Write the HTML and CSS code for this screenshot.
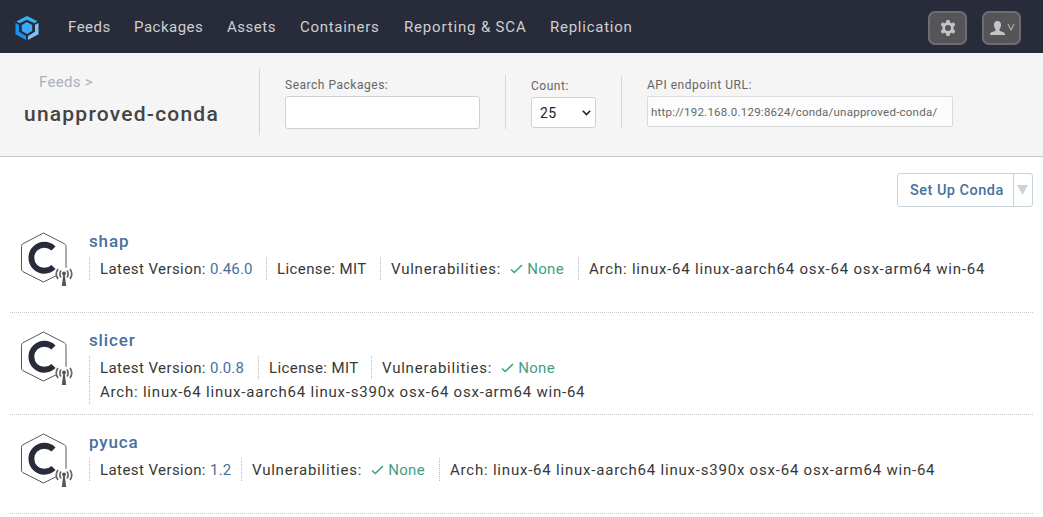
FILE: index.html
```html
<!DOCTYPE html>
<html lang="en">
<head>
<meta charset="utf-8">
<title>unapproved-conda</title>
<link rel="stylesheet" href="styles.css">
</head>
<body>
<svg class="defs" width="0" height="0">
  <symbol id="conda" viewBox="0 0 54 56">
    <path d="M23.500 1 L44.500 11.800 Q46 12.600 46 14.500 V37 Q46 38.800 44.500 39.600 L23.500 50 L2.800 39.600 Q1.500 38.800 1.500 37 V14.500 Q1.500 12.600 2.800 11.800 Z" fill="#fff" stroke="#55585f" stroke-width="1"/>
    <path d="M33.500 16.500 A13 13 0 1 0 33.500 35" fill="none" stroke="#282b3a" stroke-width="5.800"/>
    <circle cx="44" cy="43" r="7.500" fill="#fff"/>
    <path fill="none" stroke="#666" stroke-width="1.700" d="M38 37 Q34.500 42 38 47 M50 37 Q53.500 42 50 47 M41 38.500 Q38.800 42 41 45.500 M47 38.500 Q49.200 42 47 45.500"/>
    <circle cx="44" cy="41.500" r="2" fill="#555"/>
    <path d="M43.200 43 H44.800 L46.200 54 H41.800 Z" fill="#555"/>
  </symbol>
  <symbol id="check" viewBox="0 0 13 10"><path d="M1 5.500 L4.300 8.500 L12 1" fill="none" stroke="#3f9f86" stroke-width="1.600"/></symbol>
</svg>
<header class="topbar">
  <svg class="logo" viewBox="0 0 24 24">
    <path d="M1.500 5.300 L12 0 L22.500 5.300 L19.500 7.200 L12 3.700 L4.500 7.200 Z" fill="#35b3f5"/>
    <path d="M.5 7 L4 8.800 V15.800 L11 20 V24 L.5 18.200 Z" fill="#1b91ee"/>
    <path d="M23.500 7 L20 8.800 V15.800 L13 20 V24 L23.500 18.200 Z" fill="#7fc1f7"/>
    <path d="M12 6 L17.200 9 V15 L12 18 L6.800 15 V9 Z" fill="#3fa9f9"/>
  </svg>
  <nav class="nav">
    <a class="n1">Feeds</a><a class="n2">Packages</a><a class="n3">Assets</a><a class="n4">Containers</a><a class="n5">Reporting &amp; SCA</a><a class="n6">Replication</a>
  </nav>
  <div class="tools">
    <span class="tool"><svg width="16" height="16" viewBox="0 0 16 16"><path fill="#c4c4c8" fill-rule="evenodd" d="M6.500 0 H9.500 L10 2.400 L11.500 3.200 L13.700 2.300 L15.300 5 L13.500 6.700 V9.300 L15.300 11 L13.700 13.700 L11.500 12.800 L10 13.600 L9.500 16 H6.500 L6 13.600 L4.500 12.800 L2.300 13.700 L.7 11 L2.500 9.300 V6.700 L.7 5 L2.300 2.300 L4.500 3.200 L6 2.400 Z M8 5 A3 3 0 1 0 8 11 A3 3 0 1 0 8 5 Z"/></svg></span>
    <span class="tool"><svg width="26" height="16" viewBox="0 0 26 16"><path fill="#c4c4c8" d="M8.500 1 C11 1 12.200 2.700 12 5.300 C11.800 7.500 11 8.500 10.500 9.300 V10.800 L15 12.600 Q16 13.200 16 15 H1 Q1 13.200 2 12.600 L6.500 10.800 V9.300 C6 8.500 5.200 7.500 5 5.300 C4.800 2.700 6 1 8.500 1 Z"/><path d="M19 4 L22 10 L25 4" fill="none" stroke="#aaaaae" stroke-width="1.200"/></svg></span>
  </div>
</header>
<section class="feedbar">
  <div class="feed"><a class="crumb">Feeds &gt;</a><h1>unapproved-conda</h1></div>
  <div class="field search"><label>Search Packages:</label><input type="text"></div>
  <div class="field count"><label>Count:</label><div class="select"><span>25</span><svg width="9" height="6" viewBox="0 0 9 6"><path d="M.8 .8 L4.500 4.600 L8.200 .8" fill="none" stroke="#222" stroke-width="1.600"/></svg></div></div>
  <div class="field api"><label>API endpoint URL:</label><div class="url"><span>http://192.168.0.129:8624/conda/unapproved-conda/</span></div></div>
</section>
<main>
  <div class="actions"><div class="setup"><span class="setup-label">Set Up Conda</span><span class="drop"><svg width="11" height="10" viewBox="0 0 11 10"><path d="M0 0 H11 L5.500 10 Z" fill="#c7d4da"/></svg></span></div></div>
  <article class="package">
    <svg class="icon"><use href="#conda"/></svg>
    <div class="info"><h2>shap</h2>
      <div class="meta"><span class="ver w177">Latest Version: <a>0.46.0</a></span><span class="lic w114">License: MIT</span><span class="vul w198">Vulnerabilities: <b><svg class="check"><use href="#check"/></svg>None</b></span><span class="arch">Arch: linux-64 linux-aarch64 osx-64 osx-arm64 win-64</span></div>
    </div>
  </article>
  <article class="package">
    <svg class="icon"><use href="#conda"/></svg>
    <div class="info"><h2>slicer</h2>
      <div class="meta"><span class="ver w169">Latest Version: <a>0.0.8</a></span><span class="lic w113">License: MIT</span><span class="vul w198 last">Vulnerabilities: <b><svg class="check"><use href="#check"/></svg>None</b></span><span class="arch">Arch: linux-64 linux-aarch64 linux-s390x osx-64 osx-arm64 win-64</span></div>
    </div>
  </article>
  <article class="package">
    <svg class="icon"><use href="#conda"/></svg>
    <div class="info"><h2>pyuca</h2>
      <div class="meta"><span class="ver w152">Latest Version: <a>1.2</a></span><span class="vul w198">Vulnerabilities: <b><svg class="check"><use href="#check"/></svg>None</b></span><span class="arch">Arch: linux-64 linux-aarch64 linux-s390x osx-64 osx-arm64 win-64</span></div>
    </div>
  </article>
</main>
</body>
</html>
```
FILE: styles.css
```css
* { box-sizing: border-box; }
body { margin: 0; height: 517px; overflow: hidden; background: #fff; color: #383838; font-family: Roboto, "Liberation Sans", sans-serif; font-size: 15px; }
h1, h2 { margin: 0; font-weight: 500; }
svg { display: block; flex: none; }
.defs { height: 0; }
.topbar { height: 53px; background: #282b3a; display: flex; align-items: center; padding: 0 22px 0 15px; }
.logo { width: 24px; height: 24px; margin-top: 3px; }
.nav { display: flex; margin-left: 29px; color: #cfcfcf; letter-spacing: .5px; white-space: nowrap; line-height: 20px; }
.n1 { width: 66px; }
.n2 { width: 93px; }
.n3 { width: 73px; }
.n4 { width: 104px; letter-spacing: .7px; }
.n5 { width: 146px; letter-spacing: .83px; }
.n6 { width: 84px; letter-spacing: .75px; }
.tools { display: flex; gap: 15px; margin: 3px 0 0 auto; }
.tool { width: 39px; height: 34px; border: 2px solid #6e6e72; border-radius: 7px; background: #555459; display: flex; align-items: center; justify-content: center; }
.feedbar { height: 104px; background: #f5f5f5; border-bottom: 1px solid #c8c8c8; display: flex; align-items: flex-start; color: #666; }
.feed { width: 260px; height: 66px; margin-top: 16px; padding-left: 24px; border-right: 1px solid #d3d5d8; }
.crumb { display: block; margin: 3px 0 0 15px; line-height: 20px; color: #a9b0bd; letter-spacing: .3px; }
h1 { margin-top: 8px; font-size: 21px; line-height: 28px; color: #444; letter-spacing: 1.22px; white-space: nowrap; }
.field { display: flex; flex-direction: column; padding-left: 25px; }
.field label { font-size: 12px; line-height: 16px; letter-spacing: .52px; }
.search { width: 246px; height: 54px; margin-top: 22px; border-right: 1px solid #d3d5d8; padding-top: 2px; }
.search input { width: 195px; height: 33px; margin-top: 3px; border: 1px solid #cdd1d8; border-radius: 3px; background: #fff; }
.count { width: 116px; height: 52px; margin-top: 23px; border-right: 1px solid #d3d5d8; padding-top: 2px; }
.select { width: 65px; height: 31px; margin-top: 3px; padding: 0 4px 0 8px; border: 1px solid #cdd1d8; border-radius: 3px; background: #fff; color: #222; font-size: 14px; letter-spacing: .4px; display: flex; align-items: center; justify-content: space-between; }
.api { margin-top: 24px; }
.url { width: 306px; height: 31px; margin-top: 3px; padding-left: 3px; border: 1px solid #d8dade; border-radius: 2px; background: #fcfcfc; font-size: 11.5px; letter-spacing: .24px; display: flex; align-items: center; }
main { padding: 16px 10px 0; }
.actions { display: flex; justify-content: flex-end; height: 41px; }
.setup { width: 136px; height: 34px; border: 1px solid #c7d4da; border-radius: 3px; display: flex; color: #47719d; font-weight: 500; font-size: 14.5px; }
.setup-label { width: 116px; padding: 1px 0 0 12px; line-height: 32px; border-right: 1px solid #c7d4da; letter-spacing: .48px; white-space: nowrap; }
.drop { display: flex; align-items: center; padding-left: 3px; }
.package { min-height: 99px; display: flex; padding: 18px 0 10px; border-bottom: 1px dotted #c8c8c8; }
.icon { width: 54px; height: 56px; margin-left: 10px; }
.info { flex: 1; padding-left: 15px; }
h2 { height: 25px; font-size: 17px; line-height: 18px; color: #47719d; letter-spacing: .85px; }
.meta { display: flex; flex-wrap: wrap; row-gap: 1px; white-space: nowrap; letter-spacing: .2px; }
.meta > span { height: 23px; padding-left: 10px; line-height: 24px; border-left: 1px dotted #bbb; }
.meta > .ver { letter-spacing: .42px; }
.meta > .lic { letter-spacing: .4px; }
.meta > .vul { letter-spacing: .78px; display: flex; }
.meta > .arch { letter-spacing: .79px; }
.meta a { color: #47719d; letter-spacing: .15px; }
.meta b { color: #3f9f86; font-weight: 400; letter-spacing: .3px; display: flex; align-items: center; margin-left: 9px; }
.check { width: 13px; height: 10px; margin-right: 4px; }
.w177 { width: 177px; }
.w169 { width: 169px; }
.w152 { width: 152px; }
.w114 { width: 114px; }
.w113 { width: 113px; }
.w198 { width: 198px; }
/* 23px first line, 1px gap, 24px wrapped line */
.last + .arch { height: 24px; }
.package:has(.last) { padding-bottom: 10px; height: 102px; }
```
